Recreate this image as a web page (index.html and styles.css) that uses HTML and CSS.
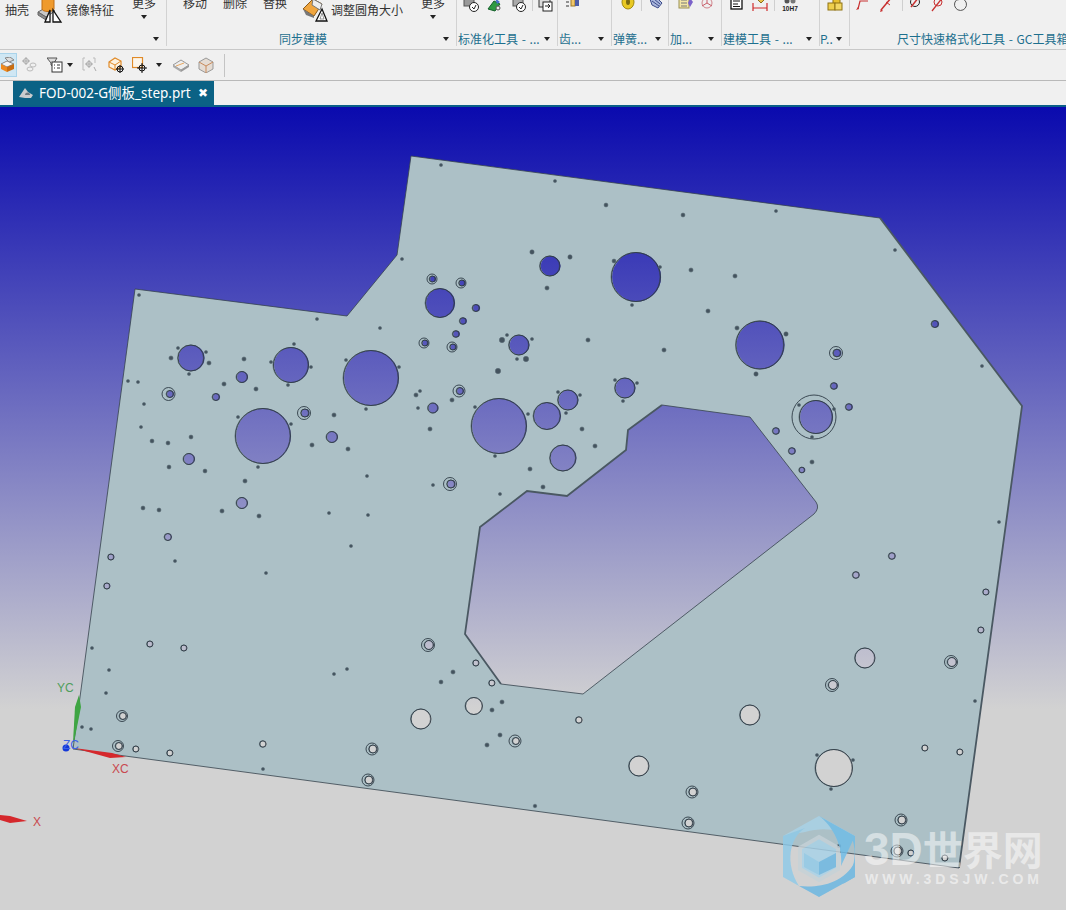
FILE: index.html
```html
<!DOCTYPE html>
<html lang="zh">
<head>
<meta charset="utf-8">
<title>FOD-002-G侧板_step.prt</title>
<link rel="stylesheet" href="styles.css">
</head>
<body>
<div class="ribbon">
  <section class="group g1">
    <div class="row">
      <span class="rtext first">抽壳</span>
      <svg class="bigic ml8" viewBox="0 0 26 26"><path d="M1 15l9-5 8 4-9 6z" fill="#c9c9c9" stroke="#666"/><path d="M1 15v3l8 5v-3z" fill="#8d8d8d" stroke="#666"/><path d="M5 2a6 2 0 0 1 12 0v10a6 2.500 0 0 1-12 0z" fill="#ef9a2d" stroke="#c06d12"/><path d="M8 25l5-12v12zM16 25V13l8 12z" fill="#fff" stroke="#111" stroke-width="1.300"/></svg>
      <span class="rtext ml3">镜像特征</span>
      <span class="more ml18"><b>更多</b><i class="caret"></i></span>
    </div>
    <div class="foot"><span class="label"></span><i class="caret"></i></div>
  </section>
  <section class="group g2">
    <div class="row">
      <span class="more ml16 nocaret"><b>移动</b></span>
      <span class="more ml16 nocaret"><b>删除</b></span>
      <span class="more ml16 nocaret"><b>替换</b></span>
      <svg class="bigic ml15" viewBox="0 0 26 26"><path d="M1 12l10-10 9 5-8 12z" fill="#f0a63f" stroke="#8a5a1a"/><path d="M11 2l9 5-2 6-8-5z" fill="#eee" stroke="#777"/><path d="M1 12l11 7 0 2-8-3z" fill="#777"/><path d="M20 12l5 12H14z" fill="#fff" stroke="#111" stroke-width="1.300"/><path d="M20 16l2 6h-4z" fill="#fff" stroke="#555" stroke-width="0.600"/></svg>
      <span class="rtext ml3">调整圆角大小</span>
      <span class="more ml18"><b>更多</b><i class="caret"></i></span>
    </div>
    <div class="foot center"><span class="label">同步建模</span><i class="caret"></i></div>
  </section>
  <section class="group g3">
    <div class="row pad6">
      <svg class="ic" viewBox="0 0 16 16"><rect x="1" y="0" width="10" height="9" fill="#999" stroke="#555"/><circle cx="11" cy="10" r="4.500" fill="#fff" stroke="#222"/><path d="M9 10l2 2 2-4" fill="none" stroke="#222"/></svg>
      <svg class="ic ml7" viewBox="0 0 16 16"><path d="M2 12l6-8 6 3-5 7z" fill="#2f9a43" stroke="#14602a"/><path d="M9 1l5 4-3 2z" fill="#4a6fd0"/><circle cx="12" cy="11" r="2" fill="#eee" stroke="#555"/></svg>
      <svg class="ic ml9" viewBox="0 0 16 16"><rect x="2" y="0" width="10" height="9" fill="#aaa" stroke="#555"/><circle cx="10" cy="10" r="4.500" fill="#fff" stroke="#222"/><path d="M8 10l2 2 2-4" fill="none" stroke="#222"/></svg>
      <i class="vsep ml5"></i>
      <svg class="ic ml5" viewBox="0 0 16 16"><rect x="1" y="0" width="11" height="10" fill="#ddd" stroke="#333"/><rect x="5" y="5" width="9" height="9" fill="#fff" stroke="#222"/><path d="M7 9h5M10 7l2 2-2 2" fill="none" stroke="#222"/></svg>
    </div>
    <div class="foot"><span class="label">标准化工具 - ...</span><i class="caret"></i></div>
  </section>
  <section class="group g4">
    <div class="row pad6">
      <svg class="ic" viewBox="0 0 16 16"><path d="M2 1h3M2 5h3M2 9h3" stroke="#333"/><rect x="7" y="1" width="4" height="8" fill="#f2c76b" stroke="#9b7a2a"/><rect x="11" y="2" width="4" height="7" fill="#4d5da8"/></svg>
    </div>
    <div class="foot"><span class="label">齿...</span><i class="caret"></i></div>
  </section>
  <section class="group g5">
    <div class="row pad8">
      <svg class="ic" viewBox="0 0 16 16"><ellipse cx="8" cy="5" rx="6" ry="7" fill="#e9c923" stroke="#a08a10"/><ellipse cx="8" cy="5" rx="2" ry="3" fill="#7a6a10"/></svg>
      <i class="vsep ml5"></i>
      <svg class="ic ml6" viewBox="0 0 16 16"><path d="M2 2l6-2 6 6-4 5-6-3z" fill="#a9b6dc" stroke="#3c4c8a"/><path d="M4 4l7 5M6 2l6 5" stroke="#3c4c8a"/></svg>
    </div>
    <div class="foot"><span class="label">弹簧...</span><i class="caret"></i></div>
  </section>
  <section class="group g6">
    <div class="row pad9">
      <svg class="ic" viewBox="0 0 16 16"><rect x="1" y="0" width="10" height="11" fill="#f3e6a6" stroke="#9a8f52"/><path d="M3 3h6M3 6h6M3 9h6" stroke="#777"/><path d="M12 1l3 4-3 5-2-4z" fill="#7b62c9"/></svg>
      <svg class="ic ml5" viewBox="0 0 16 16"><circle cx="8" cy="6" r="5" fill="none" stroke="#d0848c"/><path d="M8 1v5l5 3M8 6l-5 3" fill="none" stroke="#c85c68"/></svg>
    </div>
    <div class="foot"><span class="label">加...</span><i class="caret"></i></div>
  </section>
  <section class="group g7">
    <div class="row pad7">
      <svg class="ic" viewBox="0 0 16 16"><rect x="2" y="0" width="11" height="12" fill="#fff" stroke="#111" stroke-width="1.300"/><path d="M4 4h7M4 7h5M4 9.500h7" stroke="#111"/></svg>
      <svg class="ic ml7" viewBox="0 0 16 16"><path d="M5 2l4-2 3 3-3 3z" fill="#e8c34a" stroke="#8a6f1c"/><path d="M1 6v8M15 6v8M1 11h14" stroke="#d02c2c" stroke-width="1.200"/></svg>
      <i class="vsep ml6"></i>
      <svg class="ic ml7" viewBox="0 0 16 16"><circle cx="5" cy="4" r="2.500" fill="#555"/><circle cx="11" cy="4" r="2.500" fill="#777"/><text class="tol" x="8" y="14">10H7</text></svg>
    </div>
    <div class="foot"><span class="label">建模工具 - ...</span><i class="caret"></i></div>
  </section>
  <section class="group g8">
    <div class="row pad7">
      <svg class="ic" viewBox="0 0 16 16"><rect x="6" y="0" width="7" height="7" fill="#e8c030" stroke="#8f7312"/><rect x="1" y="6" width="7" height="7" fill="#efcf4c" stroke="#8f7312"/><rect x="8" y="6" width="7" height="7" fill="#f2d763" stroke="#8f7312"/></svg>
    </div>
    <div class="foot"><span class="label short">P..</span><i class="caret"></i></div>
  </section>
  <section class="group g9">
    <div class="row pad5">
      <svg class="ic" viewBox="0 0 16 16"><path d="M3 12L5 4h8" fill="none" stroke="#c83030" stroke-width="1.200"/><path d="M1 13l3-1-1-2z" fill="#c83030"/><text class="dim" x="7" y="3">A001</text></svg>
      <svg class="ic ml7" viewBox="0 0 16 16"><path d="M3 13L13 1" stroke="#c83030" stroke-width="1.500"/><path d="M2 15l3-1-2-2zM14 0l-3 1 2 2z" fill="#c83030"/><path d="M8 5l4 3" stroke="#c83030"/></svg>
      <i class="vsep ml8"></i>
      <svg class="ic ml4" viewBox="0 0 16 16"><circle cx="8" cy="5" r="4.500" fill="none" stroke="#222"/><path d="M4 10L12 0" stroke="#c83030" stroke-width="1.500"/></svg>
      <svg class="ic ml6" viewBox="0 0 16 16"><circle cx="9" cy="5" r="4" fill="none" stroke="#c83030"/><path d="M3 14L14 0" stroke="#c83030" stroke-width="1.300"/></svg>
      <svg class="ic ml8" viewBox="0 0 16 16"><path d="M5 2a6 6 0 1 0 5 0" fill="none" stroke="#555" stroke-width="1"/><path d="M3 1l3 0-1 3z" fill="#555"/></svg>
    </div>
    <div class="foot title"><span class="label">尺寸快速格式化工具 - GC工具箱</span></div>
  </section>
</div>

<div class="toolbar">
  <span class="tbtn"><svg class="tic tic14" viewBox="0 0 16 16"><path d="M1 7l6-3 7 3-7 3z" fill="#f4f4f4" stroke="#888"/><path d="M1 7v5l6 3v-5z" fill="#ef8a1e"/><path d="M14 7v5l-7 3v-5z" fill="#c96e12"/><path d="M5 1l5-1 4 3-5 2z" fill="#ddd" stroke="#888"/></svg></span>
  <svg class="tic ml5" viewBox="0 0 16 16"><circle cx="4" cy="4" r="2.500" fill="none" stroke="#aaa"/><path d="M4 0v8M0 4h8" stroke="#aaa"/><ellipse cx="11" cy="8" rx="3" ry="2" fill="none" stroke="#bbb"/><ellipse cx="8" cy="12" rx="3" ry="2" fill="none" stroke="#bbb"/></svg>
  <svg class="tic ml9" viewBox="0 0 16 16"><path d="M0 1h10L7 6v4L4 8V6z" fill="#ddd" stroke="#555"/><rect x="5" y="5" width="10" height="10" fill="#fff" stroke="#333"/><path d="M7 8h1M7 11h1M10 8h3M10 11h3" stroke="#333"/></svg>
  <i class="caret bar ml4"></i>
  <svg class="tic ml9" viewBox="0 0 16 16"><path d="M3 1H1v12h2M11 1h2v5" fill="none" stroke="#bbb"/><circle cx="7" cy="7" r="2.500" fill="none" stroke="#aaa"/><path d="M7 3v8M3 7h8M12 10l2 4" stroke="#aaa"/></svg>
  <svg class="tic ml10" viewBox="0 0 16 16"><path d="M1 5l6-4 6 3v6l-6 3-6-3z" fill="#fdf3e2" stroke="#e08a28" stroke-width="1.200"/><path d="M1 5l6 3 6-4M7 8v5" fill="none" stroke="#e08a28"/><circle cx="12" cy="12" r="3" fill="none" stroke="#111"/><path d="M12 8v8M8 12h8" stroke="#111"/></svg>
  <svg class="tic ml8" viewBox="0 0 16 16"><rect x="0.500" y="0.500" width="10" height="10" fill="#fdf6ea" stroke="#e08a28" stroke-width="1.200"/><circle cx="10" cy="11" r="3" fill="none" stroke="#111"/><path d="M10 6v10M5 11h10" stroke="#111"/></svg>
  <i class="caret bar ml8"></i>
  <svg class="tic ml11" viewBox="0 0 16 16"><path d="M0 8l8-5 8 5-8 5z" fill="#eee" stroke="#999"/><path d="M0 8v2l8 5v-2z" fill="#aaa"/><path d="M16 8v2l-8 5v-2z" fill="#999"/><path d="M3 9l8-3" stroke="#e8a760"/></svg>
  <svg class="tic ml9" viewBox="0 0 16 16"><path d="M1 5l7-4 7 4v7l-7 4-7-4z" fill="#e5dcd3" stroke="#999"/><path d="M1 5l7 4 7-4M8 9v7" fill="none" stroke="#c98a5a"/></svg>
  <i class="vsep tall ml10"></i>
</div>

<div class="tabbar">
  <div class="tab">
    <svg class="tabic" viewBox="0 0 14 14"><path d="M0 11L6 2l3 4 5 3-2 3H6z" fill="#c9ccce"/><path d="M6 9a2 2 0 1 1 5 0z" fill="#6d7a82"/></svg>
    <span class="tabname">FOD-002-G侧板_step.prt</span>
    <span class="tabx">✖</span>
  </div>
</div>

<main class="view">
  <svg class="scene" viewBox="0 107 1066 803">
    <defs>
      <g id="h">
        <circle cx="432.500" cy="279" r="3"/><circle cx="462" cy="283" r="3"/><circle cx="440" cy="303" r="14.500"/><circle cx="476" cy="308" r="3.500"/><circle cx="463" cy="321" r="3.300"/><circle cx="456" cy="334" r="3.300"/><circle cx="425" cy="343" r="3"/><circle cx="453" cy="347" r="3"/>
        <circle cx="191" cy="358" r="13"/><circle cx="291" cy="365" r="17.500"/><circle cx="371" cy="378" r="27.500"/><circle cx="242" cy="377" r="5.500"/><circle cx="216" cy="397" r="3.500"/><circle cx="170" cy="394" r="3.500"/><circle cx="189" cy="459" r="5.500"/><circle cx="263" cy="436" r="27.500"/><circle cx="305" cy="413" r="4"/><circle cx="332" cy="437" r="5.500"/><circle cx="242" cy="503" r="5.500"/><circle cx="168" cy="537" r="3.500"/><circle cx="451" cy="484" r="4"/><circle cx="433" cy="408" r="5"/><circle cx="460" cy="391" r="3.500"/>
        <circle cx="550" cy="266" r="10"/><circle cx="636" cy="277" r="24.500"/><circle cx="519" cy="345" r="10"/><circle cx="625" cy="388" r="10"/><circle cx="568" cy="400" r="10"/><circle cx="499" cy="426" r="27.500"/><circle cx="547" cy="416" r="13.500"/><circle cx="563" cy="458" r="13"/>
        <circle cx="760" cy="345" r="24"/><circle cx="935" cy="324" r="3.500"/><circle cx="837" cy="353" r="3.800"/><circle cx="834" cy="386" r="3.300"/><circle cx="849" cy="407" r="3.300"/><circle cx="816" cy="417" r="16.500"/><circle cx="776" cy="431" r="3.300"/><circle cx="792" cy="451" r="3.300"/><circle cx="802" cy="470" r="2.800"/>
        <circle cx="892" cy="556" r="3.300"/><circle cx="856" cy="575" r="3.300"/><circle cx="986" cy="592" r="3"/><circle cx="981" cy="630" r="3"/><circle cx="865" cy="658" r="10"/><circle cx="952" cy="662" r="4.500"/><circle cx="833" cy="685" r="4.500"/><circle cx="925" cy="748" r="3"/><circle cx="960" cy="752" r="3"/><circle cx="834" cy="768" r="18.500"/>
        <circle cx="902" cy="820" r="4"/><circle cx="898" cy="851" r="4"/><circle cx="911" cy="853" r="3"/><circle cx="945" cy="858" r="3"/>
        <circle cx="429" cy="645" r="4.500"/><circle cx="476" cy="663" r="3"/><circle cx="492" cy="683" r="3"/><circle cx="474" cy="706" r="8.500"/><circle cx="421" cy="719" r="10"/><circle cx="579" cy="720" r="3.200"/><circle cx="516" cy="741" r="3.500"/><circle cx="639" cy="766" r="10"/><circle cx="750" cy="715" r="10"/><circle cx="693" cy="792" r="4"/><circle cx="689" cy="823" r="4"/>
        <circle cx="111" cy="557" r="3"/><circle cx="107" cy="586" r="3"/><circle cx="150" cy="644" r="3"/><circle cx="184" cy="648" r="3"/><circle cx="123" cy="716" r="3.500"/><circle cx="119" cy="746" r="3.500"/><circle cx="136" cy="749" r="3"/><circle cx="170" cy="753" r="3"/><circle cx="263" cy="744" r="3.200"/><circle cx="373" cy="749" r="4"/><circle cx="369" cy="780" r="4"/>
      </g>
      <g id="t">
        <circle cx="139" cy="295" r="1.600"/><circle cx="402" cy="259" r="1.600"/><circle cx="317" cy="319" r="1.600"/><circle cx="380" cy="328" r="1.600"/><circle cx="441" cy="165" r="1.600"/><circle cx="555" cy="181" r="1.600"/><circle cx="606" cy="205" r="2"/><circle cx="683" cy="215" r="2"/><circle cx="776" cy="211" r="1.600"/><circle cx="895" cy="250" r="1.600"/><circle cx="982" cy="366" r="1.600"/>
        <circle cx="178" cy="348" r="1.600"/><circle cx="206" cy="352" r="1.600"/><circle cx="171" cy="358" r="2.100"/><circle cx="209" cy="363" r="2.100"/><circle cx="189" cy="374" r="1.600"/><circle cx="294" cy="344" r="1.600"/><circle cx="271" cy="362" r="1.600"/><circle cx="311" cy="367" r="1.600"/><circle cx="288" cy="385" r="1.600"/><circle cx="346" cy="360" r="1.600"/><circle cx="399" cy="367" r="1.600"/><circle cx="366" cy="409" r="1.600"/><circle cx="244" cy="359" r="2.100"/><circle cx="224" cy="384" r="2.100"/><circle cx="256" cy="389" r="2.100"/><circle cx="128" cy="381" r="1.600"/><circle cx="138" cy="382" r="1.600"/><circle cx="144" cy="404" r="1.600"/><circle cx="141" cy="427" r="1.600"/><circle cx="152" cy="441" r="2"/><circle cx="168" cy="443" r="2"/><circle cx="191" cy="437" r="2"/><circle cx="169" cy="467" r="2"/><circle cx="205" cy="471" r="2"/><circle cx="238" cy="417" r="1.600"/><circle cx="291" cy="424" r="1.600"/><circle cx="258" cy="467" r="1.600"/><circle cx="334" cy="415" r="2.100"/><circle cx="312" cy="445" r="2.100"/><circle cx="348" cy="449" r="2.100"/><circle cx="367" cy="476" r="1.600"/><circle cx="245" cy="481" r="2.100"/><circle cx="222" cy="511" r="2.100"/><circle cx="259" cy="516" r="2.100"/><circle cx="143" cy="508" r="2"/><circle cx="159" cy="510" r="2"/><circle cx="329" cy="513" r="1.600"/><circle cx="368" cy="515" r="1.600"/><circle cx="433" cy="485" r="1.600"/><circle cx="416" cy="395" r="2.100"/><circle cx="420" cy="391" r="1.600"/><circle cx="418" cy="408" r="1.600"/><circle cx="430" cy="429" r="2.100"/><circle cx="452" cy="400" r="2.100"/><circle cx="475" cy="407" r="1.600"/>
        <circle cx="532" cy="252" r="2.200"/><circle cx="570" cy="257" r="2.200"/><circle cx="547" cy="288" r="2.100"/><circle cx="614" cy="261" r="2"/><circle cx="660" cy="267" r="1.600"/><circle cx="632" cy="305" r="1.600"/><circle cx="691" cy="270" r="2.100"/><circle cx="735" cy="276" r="2.100"/><circle cx="708" cy="311" r="2.100"/><circle cx="588" cy="340" r="2.100"/><circle cx="664" cy="350" r="2.100"/><circle cx="737" cy="328" r="2.100"/><circle cx="502" cy="340" r="2.700"/><circle cx="507" cy="335" r="1.600"/><circle cx="532" cy="339" r="1.600"/><circle cx="517" cy="359" r="1.600"/><circle cx="526" cy="359" r="2.700"/><circle cx="498" cy="371" r="2.700"/><circle cx="615" cy="380" r="1.600"/><circle cx="637" cy="383" r="1.600"/><circle cx="623" cy="401" r="1.600"/><circle cx="558" cy="392" r="1.600"/><circle cx="580" cy="395" r="1.600"/><circle cx="566" cy="413" r="1.600"/><circle cx="528" cy="414" r="1.600"/><circle cx="495" cy="456" r="1.600"/><circle cx="582" cy="429" r="2.100"/><circle cx="595" cy="446" r="2.100"/><circle cx="530" cy="469" r="2.100"/><circle cx="543" cy="487" r="2.100"/><circle cx="500" cy="494" r="1.600"/>
        <circle cx="786" cy="334" r="2.200"/><circle cx="756" cy="374" r="2.200"/><circle cx="799" cy="405" r="1.600"/><circle cx="834" cy="409" r="1.600"/><circle cx="812" cy="437" r="1.600"/><circle cx="812" cy="462" r="2.100"/>
        <circle cx="999" cy="522" r="1.600"/><circle cx="975" cy="701" r="1.600"/><circle cx="817" cy="755" r="1.600"/><circle cx="853" cy="760" r="1.600"/><circle cx="831" cy="789" r="1.600"/><circle cx="839" cy="846" r="1.800"/>
        <circle cx="453" cy="672" r="2.100"/><circle cx="441" cy="682" r="2"/><circle cx="502" cy="702" r="2.100"/><circle cx="492" cy="710" r="2.100"/><circle cx="500" cy="735" r="2.100"/><circle cx="487" cy="745" r="2.100"/><circle cx="535" cy="806" r="1.800"/>
        <circle cx="175" cy="561" r="1.600"/><circle cx="266" cy="573" r="1.600"/><circle cx="351" cy="546" r="1.600"/><circle cx="92" cy="648" r="1.600"/><circle cx="109" cy="670" r="1.600"/><circle cx="106" cy="693" r="1.600"/><circle cx="334" cy="674" r="1.600"/><circle cx="347" cy="669" r="1.600"/><circle cx="82" cy="727" r="1.600"/><circle cx="91" cy="729" r="1.600"/><circle cx="263" cy="769" r="1.600"/>
      </g>
      <g id="r">
        <circle cx="432" cy="279" r="5"/><circle cx="461" cy="283" r="5"/><circle cx="424" cy="343" r="5"/><circle cx="452" cy="347" r="5"/><circle cx="168.500" cy="394" r="6.500"/><circle cx="304" cy="413" r="6.500"/><circle cx="450" cy="484" r="6.500"/><circle cx="459" cy="391" r="6"/><circle cx="836" cy="353" r="6.500"/><circle cx="814" cy="417" r="22"/><circle cx="951" cy="662" r="6.500"/><circle cx="832" cy="685" r="6.500"/><circle cx="901" cy="820" r="6"/><circle cx="897" cy="851" r="6"/><circle cx="428" cy="645" r="6.500"/><circle cx="515" cy="741" r="6"/><circle cx="692" cy="792" r="6"/><circle cx="688" cy="823" r="6"/><circle cx="122" cy="716" r="5.500"/><circle cx="118" cy="746" r="5.500"/><circle cx="372" cy="749" r="6"/><circle cx="368" cy="780" r="6"/>
      </g>
      <mask id="plate-mask" maskUnits="userSpaceOnUse" x="0" y="107" width="1066" height="803">
        <rect class="mask-on" x="0" y="107" width="1066" height="803"/>
        <path class="mask-off" d="M662 405L750 417L816 502Q820 508 814 514L583 694L501 684L465 634L480 527L527 491L567 496L626 450L628 430Z"/>
        <use class="mask-off" href="#h" transform="translate(0.600 0)"/>
      </mask>
    </defs>
    <polygon class="plate" mask="url(#plate-mask)" points="411,156 880,218 1022,406 959,868 73,749 135,289 347,316 397,255"/>
    <polyline class="edge" points="73,749 135,289 347,316 397,255 411,156 880,218"/>
    <polyline class="edge" points="73,749 959,868"/>
    <polyline class="edge thick" points="880,218 1022,406 959,868"/>
    <path class="edge" d="M662 405L750 417L816 502Q820 508 814 514L583 694L501 684"/>
    <polyline class="edge thick" points="501,684 465,634 480,527 527,491 567,496 626,450 628,430 662,405"/>
    <use class="ring" href="#h"/>
    <use class="ring wall" href="#h" transform="translate(-0.500 0)"/>
    <use class="ring" href="#r"/>
    <use class="tiny" href="#t"/>

    <polygon class="ax-y" points="79,695 81,707 74,742 73,742 75,707"/>
    <polygon class="ax-x" points="74,748 112,753 126,757 110,758"/>
    <circle class="ax-z" cx="66" cy="748" r="3.500"/>
    <polygon class="ax-x" points="0,815 10,816 27,821 10,823 0,820"/>
    <text class="lb lb-y" x="57" y="692">YC</text>
    <text class="lb lb-z" x="63" y="749">ZC</text>
    <text class="lb lb-x" x="112" y="773">XC</text>
    <text class="lb lb-x" x="33" y="826">X</text>

    <g class="logo">
      <path class="b1" d="M819 816l36 20v4c-12-10-30-14-50-8l-22 4z"/>
      <path class="b2" d="M855 836v41l-12 7c10-12 16-30 8-48zM819 816l36 20-14 30c2-20-8-40-22-50z"/>
      <path class="b3" d="M855 877l-36 20-20-11c20 2 44-2 56-24z"/>
      <path class="b4" d="M783 836l22-8c-16 10-20 36-6 58l-16-9z"/>
      <path class="b5" d="M819 837l19 11v21l-19 11-19-11v-21z"/>
      <path class="b6" d="M819 845l17 8-17 9-15-9z"/>
      <path class="b4" d="M804 853l15 9v13l-15-8z"/>
      <path class="b3" d="M836 853v14l-17 8v-13z"/>
    </g>
    <text class="wm" x="864" y="865"><tspan class="wm-l">3D</tspan>世界网</text>
    <text class="wm2" x="865" y="884" textLength="174" lengthAdjust="spacing">WWW.3DSJW.COM</text>
  </svg>
</main>
</body>
</html>
```
FILE: styles.css
```css
* { box-sizing: border-box; }
html, body { margin: 0; padding: 0; }
body {
  width: 1066px;
  height: 910px;
  overflow: hidden;
  display: flex;
  flex-direction: column;
  background: #f0f0f0;
  font-family: "Noto Sans", "Noto Sans CJK SC", sans-serif;
  color: #333;
}

/* ribbon */
.ribbon {
  flex: none;
  height: 50px;
  display: flex;
  overflow: hidden;
  background: #f0f0f0;
  border-bottom: 1px solid #c8c8c8;
}
.group {
  flex: none;
  height: 46px;
  display: flex;
  flex-direction: column;
  border-right: 1px solid #d2d2d2;
}
.g1 { width: 167px; }
.g2 { width: 290px; }
.g3 { width: 101px; }
.g4 { width: 54px; }
.g5 { width: 57px; }
.g6 { width: 53px; }
.g7 { width: 98px; }
.g8 { width: 30px; }
.g9 { width: 300px; border-right: 0; }

.row { height: 32px; flex: none; display: flex; align-items: flex-start; }
.pad5 { padding-left: 5px; }
.pad6 { padding-left: 6px; }
.pad7 { padding-left: 7px; }
.pad8 { padding-left: 8px; }
.pad9 { padding-left: 9px; }

.rtext {
  flex: none;
  margin-top: 2px;
  font: 12px/16px "Noto Sans CJK SC", sans-serif;
  color: #333;
  white-space: nowrap;
}
.first { margin-left: 5px; }
.bigic { flex: none; width: 26px; height: 26px; margin-top: -3px; }
.ic { flex: none; width: 16px; height: 16px; margin-top: -3px; }
.more {
  flex: none;
  width: 24px;
  display: flex;
  flex-direction: column;
  align-items: center;
  margin-top: -5px;
}
.more b { font: 12px/16px "Noto Sans CJK SC", sans-serif; color: #333; }
.more .caret { margin-top: 4px; }

.caret {
  display: block;
  flex: none;
  width: 0;
  height: 0;
  border-left: 3.5px solid transparent;
  border-right: 3.5px solid transparent;
  border-top: 4px solid #222;
}
.foot {
  height: 14px;
  flex: none;
  display: flex;
  align-items: center;
  padding: 0 7px 0 1px;
}
.foot .caret { margin-left: auto; }
.center .label { margin-left: 111px; }
.label {
  font: 12px/14px "Noto Sans CJK SC", sans-serif;
  word-spacing: 1px;
  color: #1d6f8e;
  white-space: nowrap;
}
.short { margin-left: -1px; }
.title { padding-left: 47px; overflow: hidden; }

.vsep { flex: none; display: block; width: 1px; height: 14px; margin-top: -3px; background: #cfcfcf; }
.ml3 { margin-left: 3px; }
.ml4 { margin-left: 4px; }
.ml5 { margin-left: 5px; }
.ml6 { margin-left: 6px; }
.ml7 { margin-left: 7px; }
.ml8 { margin-left: 8px; }
.ml9 { margin-left: 9px; }
.ml10 { margin-left: 10px; }
.ml11 { margin-left: 11px; }
.ml15 { margin-left: 15px; }
.ml16 { margin-left: 16px; }
.ml18 { margin-left: 18px; }

.tol { font: bold 6.500px "Liberation Sans", sans-serif; fill: #222; text-anchor: middle; }
.dim { font: 4px "Liberation Sans", sans-serif; fill: #c83030; }

/* quick toolbar */
.toolbar {
  flex: none;
  height: 31px;
  display: flex;
  align-items: center;
  background: #f0f0f0;
  border-bottom: 1px solid #b9b9b9;
}
.tbtn {
  flex: none;
  width: 17px;
  height: 24px;
  display: flex;
  align-items: center;
  justify-content: flex-end;
  background: #cfe7f4;
  border-right: 1px solid #a9d3ea;
  border-top: 1px solid #a9d3ea;
  border-bottom: 1px solid #a9d3ea;
}
.tic { flex: none; width: 16px; height: 16px; }
.caret.bar { border-left-width: 3px; border-right-width: 3px; }
.vsep.tall { height: 23px; margin-top: 0; background: #c4c4c4; }

/* tabs */
.tabbar {
  flex: none;
  height: 26px;
  padding-left: 13px;
  background: #f0f0f0;
  border-bottom: 2px solid #0a5f88;
}
.tab {
  width: 201px;
  height: 24px;
  display: flex;
  align-items: center;
  padding-left: 6px;
  background: #0b6285;
  color: #fff;
}
.tabic { flex: none; width: 14px; height: 14px; }
.tabname {
  flex: none;
  margin-left: 6px;
  width: 153px;
  font: 13.500px/24px "Noto Sans", "Noto Sans CJK SC", sans-serif;
  white-space: nowrap;
}
.tabx {
  flex: none;
  margin-left: 6px;
  font: bold 12px/24px "DejaVu Sans", sans-serif;
  color: #fff;
}

/* 3D view */
.view {
  flex: 1;
  min-height: 0;
  background: linear-gradient(#0a0aae 0, #d2d2d2 75%);
}
.scene { display: block; width: 1066px; height: 803px; }
.mask-on { fill: #fff; }
.mask-off { fill: #000; }
.plate { fill: #acc0c6; }
.edge { fill: none; stroke: #36424c; stroke-width: 0.800; }
.edge.thick { stroke: #4a5862; stroke-width: 1.800; }
.ring { fill: none; stroke: #2f3c46; stroke-width: 1; stroke-opacity: 0.9; }
.ring.wall { stroke-opacity: 0.5; }
.tiny { fill: #44535e; stroke: #5a6a75; stroke-width: 0.500; }

.ax-y { fill: #3fa543; }
.ax-x { fill: #d5282c; }
.ax-z { fill: #1438d8; }
.lb { font: 12px "Liberation Sans", sans-serif; }
.lb-y { fill: #4f9e5c; }
.lb-z { fill: #3c62e6; }
.lb-x { fill: #c9494f; }

.logo { opacity: 0.82; }
.b1 { fill: #a9d3e8; }
.b2 { fill: #6fbde8; }
.b3 { fill: #68b6e2; }
.b4 { fill: #8ecae9; }
.b5 { fill: #a9d3e8; stroke: #c6d2d8; stroke-width: 4; }
.b6 { fill: #a8d2e8; }
.wm {
  font: bold 40px "Noto Sans CJK SC", sans-serif;
  fill: #fff;
  fill-opacity: 0.5;
}
.wm-l { font: bold 46px "Liberation Sans", sans-serif; }
.wm2 {
  font: bold 14px "Liberation Sans", sans-serif;
  fill: #fff;
  fill-opacity: 0.55;
}
```
